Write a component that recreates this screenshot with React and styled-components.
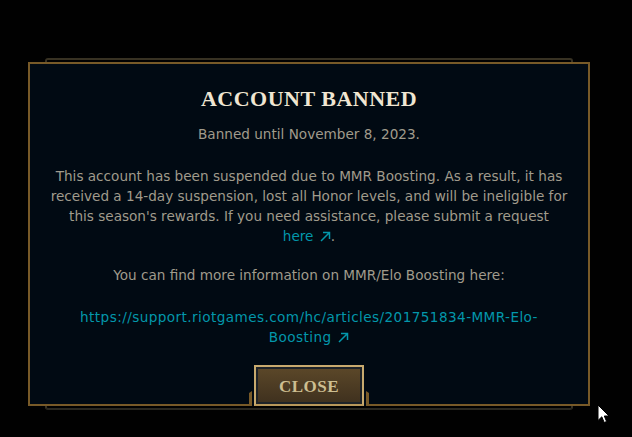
import React from "react";
import styled, { createGlobalStyle } from "styled-components";

const Global = createGlobalStyle`
  html, body { margin: 0; padding: 0; background: #010101; }
  body { width: 632px; height: 437px; overflow: hidden; position: relative; }
`;

const Page = styled.div`
  padding: 58px 0 0 45px;
`;

const Frame = styled.div`
  width: 524px;
  border: 2px solid #383223;
  border-bottom-color: #2a2820;
  border-radius: 3px;
  padding: 2px 0;
`;

const Panel = styled.div`
  margin: 0 -19px 0 -19px;
  background: #010a13;
  border: 2px solid #785a28;
  padding: 22px 0 0;
  display: flex;
  flex-direction: column;
  align-items: center;
  text-align: center;
  font-family: "DejaVu Sans", "Liberation Sans", sans-serif;
  font-size: 13.6px;
  line-height: 20px;
  color: #a09b8c;
`;

const Title = styled.h1`
  margin: 0;
  font-family: "Liberation Serif", "DejaVu Serif", serif;
  font-weight: 700;
  font-size: 22px;
  line-height: 26px;
  letter-spacing: 0.5px;
  color: #f0e6d2;
`;

const Para = styled.p`
  margin: ${(p) => p.$mt}px 0 0;
  width: 550px;
  letter-spacing: ${(p) => p.$ls || 0}px;
`;

const Link = styled.a`
  color: #0397ab;
  text-decoration: none;
  white-space: nowrap;
`;

const Arrow = styled.svg`
  width: 11px;
  height: 11px;
  vertical-align: -1px;
  margin-left: 2px;
`;

const ButtonWrap = styled.div`
  position: relative;
  margin: 18px 0 -2px;
  padding: 0 5px;
  background: #010a13;
  display: flex;
  &::before, &::after {
    content: "";
    position: absolute;
    bottom: 0;
    width: 3px;
    height: 15px;
    background: #785a28;
    clip-path: polygon(0 2px, 100% 0, 100% 100%, 0 100%);
  }
  &::before { left: 0; }
  &::after { right: 0; transform: scaleX(-1); }
`;

const CloseButton = styled.button`
  width: 110px;
  height: 41px;
  box-sizing: border-box;
  border: 2px solid #c8aa6e;
  border-bottom-color: #b8975a;
  background: linear-gradient(#5c4829, #3e301e);
  box-shadow: inset 0 0 0 2px #1e2328;
  font-family: "Liberation Serif", "DejaVu Serif", serif;
  font-weight: 700;
  font-size: 17px;
  letter-spacing: 0.5px;
  color: #cdbe91;
  padding: 2px 0 0;
  cursor: pointer;
`;

const Cursor = styled.svg`
  position: absolute;
  left: 597px;
  top: 404px;
  width: 13px;
  height: 20px;
`;

const ExtArrow = () => (
  <Arrow viewBox="0 0 11 11" fill="none" stroke="#0397ab" strokeWidth="1.5">
    <path d="M1 10 L9.5 1.5 M3 1.5 H9.5 V8" />
  </Arrow>
);

export default function App() {
  return (
    <>
      <Global />
      <Page>
        <Frame>
          <Panel>
            <Title>ACCOUNT BANNED</Title>
            <Para $mt={12}>Banned until November 8, 2023.</Para>
            <Para $mt={22}>
              This account has been suspended due to MMR Boosting. As a result, it has
              <br />
              received a 14-day suspension, lost all Honor levels, and will be ineligible for
              <br />
              this season's rewards. If you need assistance, please submit a request
              <br />
              <Link href="#">
                here <ExtArrow />
              </Link>
              .
            </Para>
            <Para $mt={19}>You can find more information on MMR/Elo Boosting here:</Para>
            <Para $mt={22} $ls={0.42}>
              <Link href="#">
                https://support.riotgames.com/hc/articles/201751834-MMR-Elo-
                <br />
                Boosting <ExtArrow />
              </Link>
            </Para>
            <ButtonWrap>
              <CloseButton>CLOSE</CloseButton>
            </ButtonWrap>
          </Panel>
        </Frame>
      </Page>
      <Cursor viewBox="0 0 13 20">
        <path
          d="M1 1 L1 16.5 L4.8 12.8 L7.2 18.5 L9.6 17.5 L7.3 12 L12 12 Z"
          fill="#fff"
          stroke="#000"
          strokeWidth="1"
          strokeLinejoin="round"
        />
      </Cursor>
    </>
  );
}
